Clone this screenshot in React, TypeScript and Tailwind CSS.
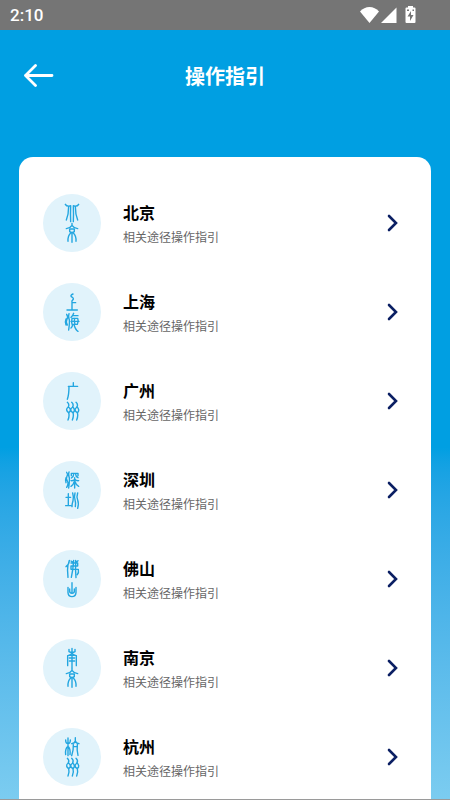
import type { ReactNode } from 'react';

type City = {
  name: string;
  emblem: ReactNode;
};

const zhouEmblem = (
  <>
    <path d="M73 91q7 6 3 14M77 122q3 10-2 22" />
    <path d="M86 91q7 6 3 14M90 122q3 10-2 22" />
    <path d="M99 91q7 6 3 14M103 122q3 10-2 22" />
    <path d="M76 105q-6 4-5 9q1 5 6 8q6-4 5-9q-1-5-6-8M89 105q-6 4-6 9q1 5 7 8q5-4 4-9q-1-5-5-8M102 105q-6 4-6 9q1 5 7 8q5-4 4-9q-1-5-5-8" />
  </>
);

const jingEmblem = (
  <>
    <path d="M87 88v7M70 104q12-2 17-10q5 8 17 10" />
    <path d="M80 105h14v8q-7 5-14 0z" />
    <path d="M87 117v28M83 117q-9 8-8 25M91 117q9 8 8 25" />
  </>
);

const cities: City[] = [
  {
    name: '北京',
    emblem: (
      <>
        <path d="M67 31q4 7 14 5M77 37q0 24-7 41M83 35q-1 24 0 48" />
        <path d="M107 31q-4 7-14 5M97 37q0 24 7 41M91 35q1 24 0 48" />
        {jingEmblem}
      </>
    ),
  },
  {
    name: '上海',
    emblem: (
      <>
        <path d="M90 33q-9 4-5 8q9 5 5 9q-5 4-3 9v22M87 59h11M72 81h31" />
        <path d="M71 94q5 8 1 14t1 18M78 92q-3 9 0 15t-1 34M69 108q-4 10 0 18" />
        <path d="M92 91q-3 9-8 12M90 98h15M87 106q-2 12 0 18h16q5-9 1-18zM84 115h24M95 106q-3 9 1 18M89 124q-1 8-5 11M93 125q5 16 12 20" />
      </>
    ),
  },
  {
    name: '广州',
    emblem: (
      <>
        <path d="M91 32v9M76 43h28M78 43q0 25-5 39" />
        {zhouEmblem}
      </>
    ),
  },
  {
    name: '深圳',
    emblem: (
      <>
        <path d="M71 34q5 6 1 12t1 14t-2 19M78 33q-3 8 0 14t-1 34M69 50q-3 8 0 15" />
        <path d="M85 44v-7h20v7M92 40q0 7-7 11M98 40q0 7 7 10M95 50v31M84 59q7 1 11-4q5 5 12 4M94 61q-3 11-10 15M96 61q3 11 11 15" />
        <path d="M76 98v36M69 109h14M68 134h17" />
        <path d="M89 96q4 14 1 23t-3 18M96 96q-3 11 0 20t1 21M104 96q-4 12 0 21t0 25" />
      </>
    ),
  },
  {
    name: '佛山',
    emblem: (
      <>
        <path d="M79 31q-1 13-10 19M75 43q-3 17 0 39" />
        <path d="M84 39h20v9H84v10h22q2 10-3 16M92 31q-2 30-7 51M98 31q-1 30 1 52M84 33l8 5M105 32l-7 6" />
        <path d="M87 98v29M75 112v16q1 12 12 12t12-12v-16M80 117v7q0 6 7 6t7-6v-7" />
      </>
    ),
  },
  {
    name: '南京',
    emblem: (
      <>
        <path d="M87 28v12M78 31v7q9 5 18 0v-7M74 80V50q12-2 13-9q1 7 13 9v30" />
        <path d="M80 49h14M79 57h16M79 66h16M87 43v43" />
        {jingEmblem}
      </>
    ),
  },
  {
    name: '杭州',
    emblem: (
      <>
        <path d="M75 30v53M68 36q0 11 7 11t7-11M68 80q-2-20 7-25q8 7 6 25" />
        <path d="M97 29v11M86 47q9-1 11-8q2 7 11 8M91 50q1 15-5 33M91 56h12M103 50q-2 18 2 32" />
        {zhouEmblem}
      </>
    ),
  },
];

function StatusBar() {
  return (
    <div className="flex h-[30px] shrink-0 items-center justify-between bg-[#757575] pr-8 pl-[10px] text-white">
      <span className="font-['Roboto',sans-serif] text-[17px] leading-5 font-medium">2:10</span>
      <svg width="58" height="20" viewBox="0 0 58 20" fill="currentColor" aria-hidden="true">
        <path d="M0 6.500C5 .5 14 .5 19 6.500L9.500 18z" />
        <path d="M36.500 2.500V18H21z" />
        <path d="M48 1h5v1.500h1.500a1 1 0 0 1 1 1V17a1 1 0 0 1-1 1h-8a1 1 0 0 1-1-1V3.500a1 1 0 0 1 1-1H48z" />
        <path d="M51 6l-3.500 5.500H50V16l3.500-6H51zM47 4.500h2V6h-2zM52.500 4.500H54V6h-1.500z" fill="#757575" />
      </svg>
    </div>
  );
}

function CityRow({ name, emblem }: City) {
  return (
    <li>
      <a href={`#${name}`} className="flex items-center">
        <svg
          className="size-[58px] shrink-0 rounded-full bg-[#e1f3fb]"
          viewBox="0 0 174 174"
          fill="none"
          stroke="#23a6e0"
          strokeWidth="4.200"
          strokeLinecap="round"
          strokeLinejoin="round"
          aria-hidden="true"
        >
          {emblem}
        </svg>
        <span className="ml-[22px] flex flex-1 flex-col gap-[5px] pb-px">
          <span className="text-base leading-6 font-bold text-black">{name}</span>
          <span className="text-xs leading-4 text-[#666666]">相关途径操作指引</span>
        </span>
        <svg
          className="mr-2 shrink-0"
          width="12"
          height="18"
          viewBox="0 0 12 18"
          fill="none"
          stroke="#0b1f63"
          strokeWidth="2.600"
          strokeLinecap="round"
          aria-hidden="true"
        >
          <path d="M2 2l7 7-7 7" />
        </svg>
      </a>
    </li>
  );
}

export default function App() {
  return (
    <div className="flex h-screen flex-col overflow-hidden border-b border-[#9a9a9a] bg-linear-to-b from-[#009fe2] from-56% to-[#7bccf0] font-['Noto_Sans_CJK_SC',sans-serif]">
      <StatusBar />

      <header className="grid shrink-0 grid-cols-[1fr_auto_1fr] items-center px-6 pt-[30px] text-white">
        <button type="button" aria-label="返回" className="justify-self-start">
          <svg
            width="30"
            height="24"
            viewBox="0 0 30 24"
            fill="none"
            stroke="currentColor"
            strokeWidth="2.800"
            strokeLinecap="round"
            strokeLinejoin="round"
            aria-hidden="true"
          >
            <path d="M11.500 1.500L1.500 11.500l10 10M1.500 11.500H28" />
          </svg>
        </button>
        <h1 className="text-xl leading-8 font-bold">操作指引</h1>
      </header>

      <main className="mx-[19px] mt-[65px] flex-1 overflow-y-auto rounded-t-[14px] bg-white px-6 pt-[37px] [scrollbar-width:none]">
        <ul className="flex flex-col gap-[31px] pb-8">
          {cities.map((city) => (
            <CityRow key={city.name} {...city} />
          ))}
        </ul>
      </main>
    </div>
  );
}
